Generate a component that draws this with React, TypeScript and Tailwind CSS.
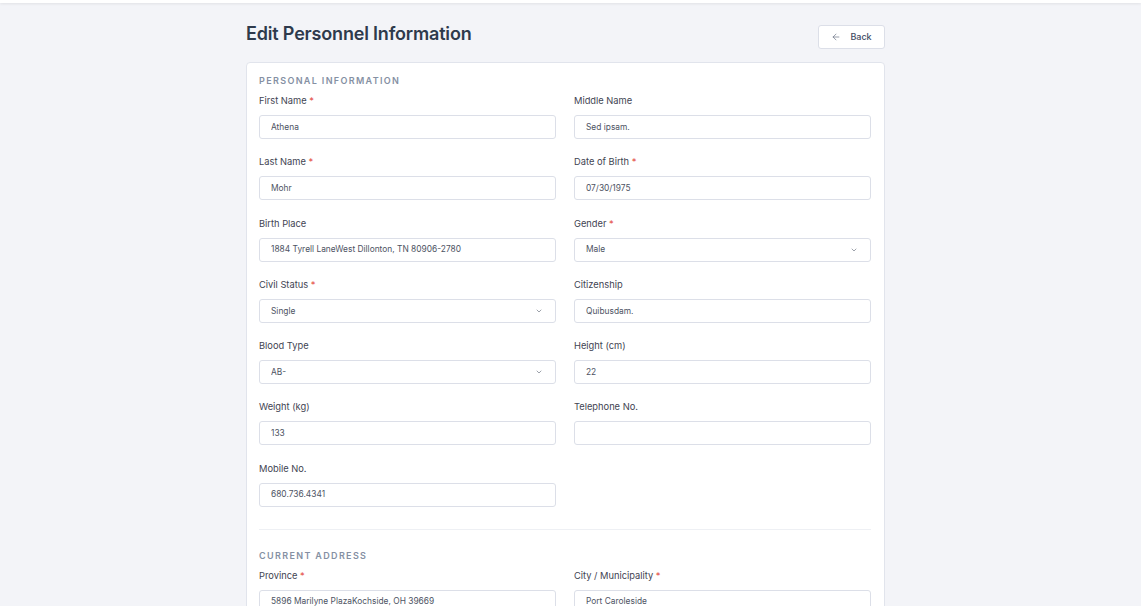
import { ArrowLeft, ChevronDown } from "lucide-react";

type Field = {
  label: string;
  value: string;
  required?: boolean;
  select?: boolean;
};

const personal: (Field | null)[] = [
  { label: "First Name", value: "Athena", required: true },
  { label: "Middle Name", value: "Sed ipsam." },
  { label: "Last Name", value: "Mohr", required: true },
  { label: "Date of Birth", value: "07/30/1975", required: true },
  { label: "Birth Place", value: "1884 Tyrell LaneWest Dillonton, TN 80906-2780" },
  { label: "Gender", value: "Male", required: true, select: true },
  { label: "Civil Status", value: "Single", required: true, select: true },
  { label: "Citizenship", value: "Quibusdam." },
  { label: "Blood Type", value: "AB-", select: true },
  { label: "Height (cm)", value: "22" },
  { label: "Weight (kg)", value: "133" },
  { label: "Telephone No.", value: "" },
  { label: "Mobile No.", value: "680.736.4341" },
  null,
];

const address: Field[] = [
  { label: "Province", value: "5896 Marilyne PlazaKochside, OH 39669", required: true },
  { label: "City / Municipality", value: "Port Caroleside", required: true },
  { label: "Barangay", value: "Lake Dorothy", required: true },
  { label: "Street", value: "Hettinger Ford" },
];

function FormField({ field }: { field: Field }) {
  return (
    <div className="flex flex-col">
      <label className="text-[9.3px] leading-[12px] text-[#3f4452] mb-[8px]">
        {field.label}
        {field.required && <span className="text-[#e5534b]"> *</span>}
      </label>
      <div className="h-[24px] border border-[#dcdfe8] rounded-[3px] bg-white flex items-center pl-[11px] pr-[12px]">
        <span className="text-[8.4px] text-[#4d5363] flex-1 truncate">{field.value}</span>
        {field.select && <ChevronDown size={8} strokeWidth={2} className="text-[#6b7280]" />}
      </div>
    </div>
  );
}

function SectionTitle({ children }: { children: string }) {
  return (
    <p className="text-[9px] leading-[10px] font-semibold tracking-[0.15em] text-[#8590a3] mb-[9px]">
      {children}
    </p>
  );
}

export default function App() {
  return (
    <div className="min-h-screen bg-[#f3f4f8] font-['Inter',sans-serif]">
      <div className="h-[3px] bg-white shadow-[0_1px_3px_rgba(0,0,0,0.08)]" />
      <div className="w-[639px] ml-[246px] pt-[22px]">
        <div className="flex items-center justify-between h-[24px]">
          <h1 className="text-[18px] leading-[22px] pb-[6px] font-semibold text-[#2e3a4c] tracking-[-0.01em]">
            Edit Personnel Information
          </h1>
          <button className="h-[24px] w-[67px] bg-white border border-[#dcdfe8] rounded-[3px] flex items-center justify-center gap-[9px] text-[9px] text-[#3e4a63] font-medium">
            <ArrowLeft size={10} strokeWidth={1.5} className="text-[#5a6478]" />
            Back
          </button>
        </div>

        <div className="mt-[13px] bg-white border border-[#e1e4ec] rounded-[4px] pt-[13px] pl-[12px] pr-[13px] pb-[20px]">
          <SectionTitle>PERSONAL INFORMATION</SectionTitle>
          <div className="grid grid-cols-2 gap-x-[18px] gap-y-[17.3px]">
            {personal.map((f, i) => (f ? <FormField key={i} field={f} /> : <div key={i} />))}
          </div>

          <div className="border-t border-[#eef0f4] mt-[22px] mb-[21px]" />

          <SectionTitle>CURRENT ADDRESS</SectionTitle>
          <div className="grid grid-cols-2 gap-x-[18px] gap-y-[17.3px]">
            {address.map((f, i) => (
              <FormField key={i} field={f} />
            ))}
          </div>
        </div>
      </div>
    </div>
  );
}
